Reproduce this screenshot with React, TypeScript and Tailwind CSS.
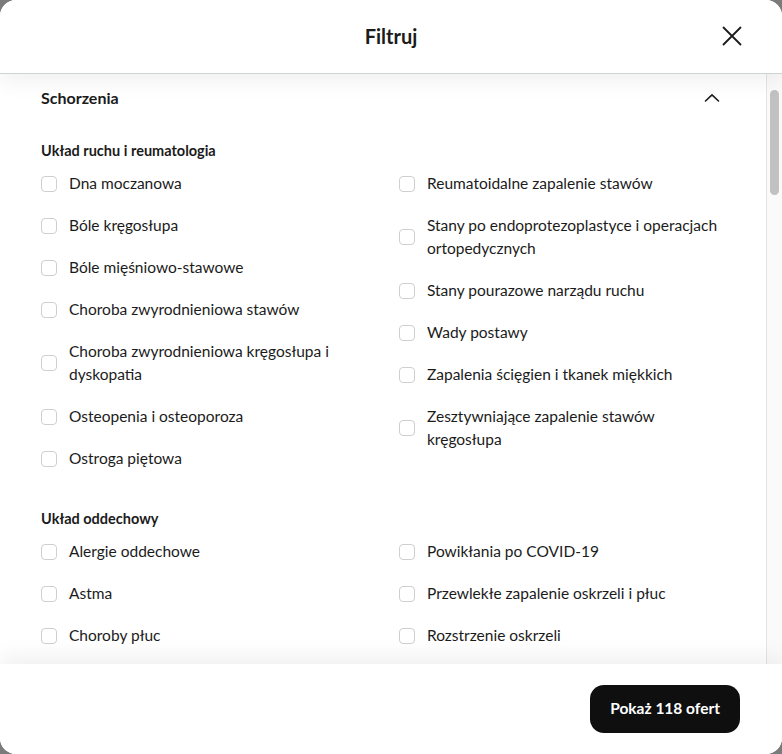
const sections: { title: string; items: string[] }[] = [
  {
    title: "Układ ruchu i reumatologia",
    items: [
      "Dna moczanowa",
      "Bóle kręgosłupa",
      "Bóle mięśniowo-stawowe",
      "Choroba zwyrodnieniowa stawów",
      "Choroba zwyrodnieniowa kręgosłupa i\ndyskopatia",
      "Osteopenia i osteoporoza",
      "Ostroga piętowa",
      "Reumatoidalne zapalenie stawów",
      "Stany po endoprotezoplastyce i operacjach\nortopedycznych",
      "Stany pourazowe narządu ruchu",
      "Wady postawy",
      "Zapalenia ścięgien i tkanek miękkich",
      "Zesztywniające zapalenie stawów\nkręgosłupa",
    ],
  },
  {
    title: "Układ oddechowy",
    items: [
      "Alergie oddechowe",
      "Astma",
      "Choroby płuc",
      "Powikłania po COVID-19",
      "Przewlekłe zapalenie oskrzeli i płuc",
      "Rozstrzenie oskrzeli",
    ],
  },
];

function Checkbox({ label }: { label: string }) {
  return (
    <label className="flex items-center gap-3 cursor-pointer">
      <span className="w-4 h-4 shrink-0 rounded-[4px] border border-[#cfcfcf] bg-white" />
      <span className="text-[15.5px] leading-[23px] text-[#1b1b1b] whitespace-pre-line">{label}</span>
    </label>
  );
}

function Section({ title, items, first }: { title: string; items: string[]; first?: boolean }) {
  const half = Math.ceil(items.length / 2);
  const cols = [items.slice(0, half), items.slice(half)];
  return (
    <div className={first ? "mt-[30px]" : "mt-[38px]"}>
      <h4 className="text-[14.5px] leading-[22px] font-bold text-[#1b1b1b] mb-[10px]">
        {title}
      </h4>
      <div className="grid grid-cols-2 gap-x-8">
        {cols.map((col, i) => (
          <div key={i} className="flex flex-col gap-y-[19px]">
            {col.map((item) => (
              <Checkbox key={item} label={item} />
            ))}
          </div>
        ))}
      </div>
    </div>
  );
}

export default function App() {
  return (
    <div className="bg-[#7b7b7b] min-h-screen" style={{ fontFamily: "Lato, 'Noto Sans', sans-serif" }}>
      <div className="w-full h-[754px] bg-white rounded-2xl overflow-hidden flex flex-col">
        <div className="relative z-10 h-[74px] shrink-0 flex items-center justify-center border-b border-[#cdd3d5] bg-white shadow-[0_8px_20px_rgba(0,0,0,0.06)]">
          <h2 className="text-[20px] font-bold text-[#1b1b1b] -mt-[2px]">Filtruj</h2>
          <button className="absolute right-[40px] top-[26px] w-5 h-5 flex items-center justify-center">
            <svg width="20" height="20" viewBox="0 0 20 20" fill="none" stroke="#1b1b1b" strokeWidth="1.8" strokeLinecap="round">
              <path d="M1.5 1.5 L18.5 18.5 M18.5 1.5 L1.5 18.5" />
            </svg>
          </button>
        </div>

        <div className="flex-1 min-h-0 flex">
          <div className="flex-1 overflow-hidden px-[41px] pt-3">
            <div className="flex items-center justify-between h-6">
              <h3 className="text-[16px] font-bold text-[#1b1b1b]">Schorzenia</h3>
              <svg width="16" height="10" viewBox="0 0 16 10" fill="none" stroke="#1b1b1b" strokeWidth="1.6" strokeLinecap="round" strokeLinejoin="round" className="mr-[5px]">
                <path d="M1.5 8 L8 1.8 L14.5 8" />
              </svg>
            </div>
            {sections.map((s, i) => (
              <Section key={s.title} title={s.title} items={s.items} first={i === 0} />
            ))}
          </div>
          <div className="w-4 shrink-0 border-l border-[#e4e4e4] bg-[#fafafa]">
            <div className="mt-4 mx-[3px] h-[105px] rounded-full bg-[#c1c1c1]" />
          </div>
        </div>

        <div className="relative z-10 h-[90px] shrink-0 flex items-center justify-end pr-[42px] bg-white shadow-[0_-8px_20px_rgba(0,0,0,0.06)]">
          <button className="h-12 px-[20px] rounded-[14px] bg-[#0f0f0f] text-white text-[15.5px] font-bold">
            Pokaż 118 ofert
          </button>
        </div>
      </div>
    </div>
  );
}
